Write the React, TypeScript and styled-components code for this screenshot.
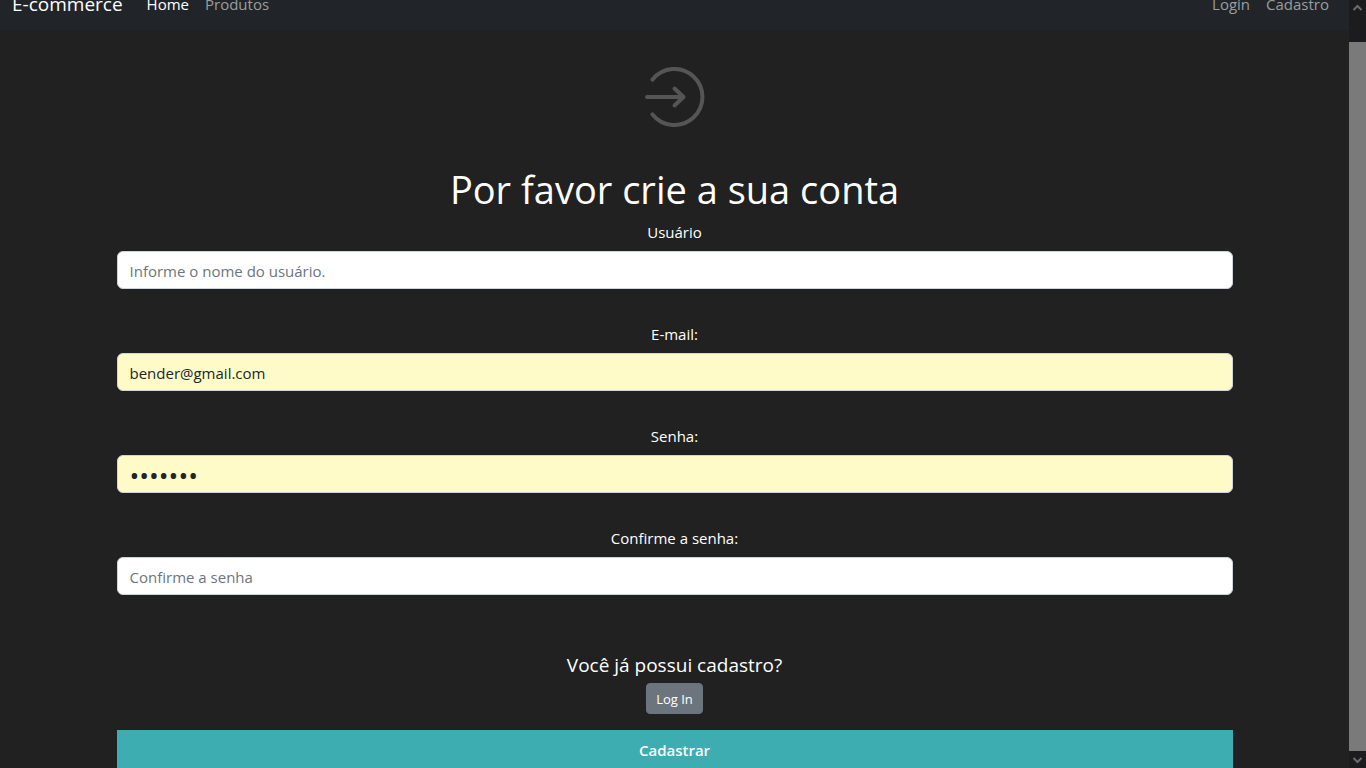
import { InputHTMLAttributes } from "react";
import styled, { createGlobalStyle } from "styled-components";

const GlobalStyle = createGlobalStyle`
  *, *::before, *::after { box-sizing: border-box; }
  html, body { margin: 0; background: #212121; overflow: hidden; }
  body, input, button {
    font-family: "Segoe UI", "Open Sans", "Noto Sans", sans-serif;
    font-size: 15px;
    line-height: 24px;
  }
`;

const Shell = styled.div`
  display: flex;
  height: 100vh;
`;

const Page = styled.div`
  flex: 1;
  min-width: 0;
  overflow: hidden;
  color: #fff;
`;

/* The page is scrolled a little, so the top of the bar is out of view. */
const Navbar = styled.nav`
  display: flex;
  align-items: center;
  height: 56px;
  margin-top: -26px;
  padding: 4px 12px 0;
  background: #212529;
`;

const Brand = styled.a`
  margin-right: 16px;
  color: #fff;
  font-size: 19px;
  text-decoration: none;
`;

const NavGroup = styled.div<{ $end?: boolean }>`
  display: flex;
  margin-left: ${({ $end }) => ($end ? "auto" : "0")};
`;

const NavLink = styled.a<{ $active?: boolean }>`
  padding: 8px;
  color: ${({ $active }) => ($active ? "#fff" : "#9b9d9f")};
  text-decoration: none;
`;

const Main = styled.main`
  max-width: 1140px;
  margin: 0 auto;
  padding: 37px 12px 0;
  text-align: center;
`;

const EnterIcon = styled.svg`
  display: block;
  margin: 0 auto 38px;
`;

const Title = styled.h1`
  margin: 0 0 7px;
  font-size: 38px;
  font-weight: 400;
  line-height: 48px;
`;

const FieldBox = styled.div`
  margin-bottom: 33px;
`;

const Label = styled.label`
  display: block;
  margin-bottom: 7px;
`;

const Input = styled.input<{ $filled?: boolean }>`
  display: block;
  width: 100%;
  height: 38px;
  padding: 8px 12px 6px;
  border: 1px solid #ced4da;
  border-radius: 6px;
  background: ${({ $filled }) => ($filled ? "#fffbc8" : "#fff")};
  color: #212529;
  &::placeholder { color: #6c757d; opacity: 1; }
  &[type="password"]:not(:placeholder-shown) {
    font-size: 26px;
  }
`;

const Question = styled.h2`
  margin: 58px 0 6px;
  font-size: 19px;
  font-weight: 400;
  line-height: 24px;
`;

const LoginButton = styled.button`
  display: block;
  margin: 0 auto 16px;
  padding: 5px 9px 3px;
  border: 1px solid #6c757d;
  border-radius: 4px;
  background: #6c757d;
  color: #fff;
  font-size: 13px;
  line-height: 21px;
`;

const SubmitButton = styled.button`
  display: block;
  width: 100%;
  padding: 8px;
  border: 0;
  background: #3dadb2;
  color: #fff;
  font-weight: 600;
`;

const ScrollTrack = styled.div`
  display: flex;
  flex-direction: column;
  width: 17px;
  background: #1c1c1e;
`;

const ScrollThumb = styled.div`
  flex: 1;
  margin-top: 25px;
  background: #7a7a7a;
`;

const ArrowBox = styled.svg`
  display: block;
  flex: none;
`;

type FieldProps = InputHTMLAttributes<HTMLInputElement> & {
  id: string;
  label: string;
};

function Field({ label, ...input }: FieldProps) {
  return (
    <FieldBox>
      <Label htmlFor={input.id}>{label}</Label>
      <Input {...input} $filled={Boolean(input.defaultValue)} />
    </FieldBox>
  );
}

function ScrollArrow({ d }: { d: string }) {
  return (
    <ArrowBox width="17" height="17" viewBox="0 0 17 17" fill="none" stroke="#6b6b6d" strokeWidth="2" aria-hidden="true">
      <path d={d} />
    </ArrowBox>
  );
}

export default function App() {
  return (
    <Shell>
      <GlobalStyle />
      <Page>
        <Navbar>
          <Brand href="#">E-commerce</Brand>
          <NavGroup>
            <NavLink href="#" $active>Home</NavLink>
            <NavLink href="#">Produtos</NavLink>
          </NavGroup>
          <NavGroup $end>
            <NavLink href="#">Login</NavLink>
            <NavLink href="#">Cadastro</NavLink>
          </NavGroup>
        </Navbar>
        <Main>
          <EnterIcon width="60" height="60" viewBox="0 0 60 60" fill="none" stroke="#555" strokeWidth="4" strokeLinecap="round" strokeLinejoin="round" aria-hidden="true">
            <path d="M7.500 12.600A28 28 0 1 1 7.500 47.400" />
            <path d="M2 30H38.500M29.500 21.500L38.500 30L29.500 38.500" />
          </EnterIcon>
          <form onSubmit={(event) => event.preventDefault()}>
            <Title>Por favor crie a sua conta</Title>
            <Field id="usuario" label="Usuário" type="text" placeholder="Informe o nome do usuário." />
            <Field id="email" label="E-mail:" type="email" defaultValue="bender@gmail.com" />
            <Field id="senha" label="Senha:" type="password" placeholder="Senha" defaultValue="futuram" />
            <Field id="confirma" label="Confirme a senha:" type="password" placeholder="Confirme a senha" />
            <Question>Você já possui cadastro?</Question>
            <LoginButton type="button">Log In</LoginButton>
            <SubmitButton type="submit">Cadastrar</SubmitButton>
          </form>
        </Main>
      </Page>
      <ScrollTrack aria-hidden="true">
        <ScrollArrow d="M4.500 10L8.500 6L12.500 10" />
        <ScrollThumb />
        <ScrollArrow d="M4.500 7L8.500 11L12.500 7" />
      </ScrollTrack>
    </Shell>
  );
}
